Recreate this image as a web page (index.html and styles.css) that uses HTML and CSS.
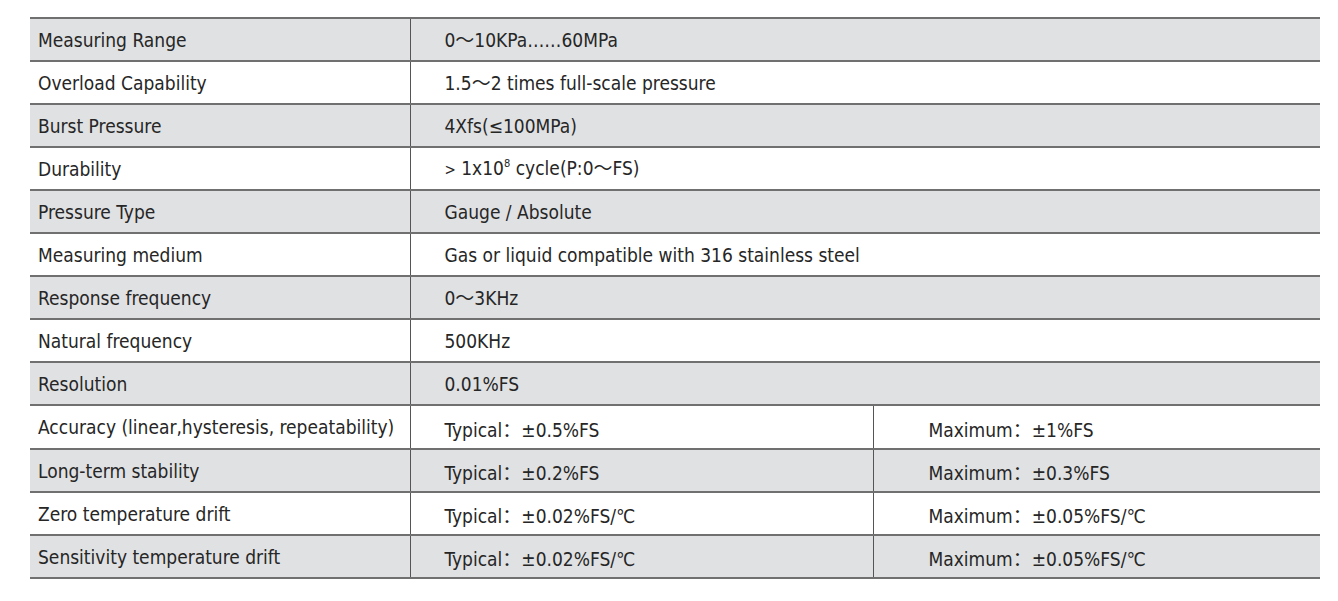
FILE: index.html
```html
<!DOCTYPE html>
<html>
<head>
<meta charset="utf-8">
<link rel="stylesheet" href="styles.css">
</head>
<body>
<table class="spec">
  <colgroup><col class="c1"><col class="c2"><col class="c3"></colgroup>
  <tr class="g"><td class="k">Measuring Range</td><td class="v" colspan="2">0～10KPa……60MPa</td></tr>
  <tr><td class="k">Overload Capability</td><td class="v" colspan="2">1.5～2 times full-scale pressure</td></tr>
  <tr class="g"><td class="k">Burst Pressure</td><td class="v" colspan="2">4Xfs(≤100MPa)</td></tr>
  <tr><td class="k">Durability</td><td class="v" colspan="2"><span class="gt">&gt;</span> 1x10<sup>8</sup> cycle(P:0～FS)</td></tr>
  <tr class="g"><td class="k">Pressure Type</td><td class="v" colspan="2">Gauge / Absolute</td></tr>
  <tr><td class="k">Measuring medium</td><td class="v" colspan="2">Gas or liquid compatible with 316 stainless steel</td></tr>
  <tr class="g"><td class="k">Response frequency</td><td class="v" colspan="2">0～3KHz</td></tr>
  <tr><td class="k">Natural frequency</td><td class="v" colspan="2">500KHz</td></tr>
  <tr class="g"><td class="k">Resolution</td><td class="v" colspan="2">0.01%FS</td></tr>
  <tr class="tall"><td class="k">Accuracy (linear,hysteresis, repeatability)</td><td class="v s">Typical：±0.5%FS</td><td class="m s">Maximum：±1%FS</td></tr>
  <tr class="g"><td class="k">Long-term stability</td><td class="v s">Typical：±0.2%FS</td><td class="m s">Maximum：±0.3%FS</td></tr>
  <tr><td class="k">Zero temperature drift</td><td class="v s">Typical：±0.02%FS/℃</td><td class="m s">Maximum：±0.05%FS/℃</td></tr>
  <tr class="g"><td class="k">Sensitivity temperature drift</td><td class="v s">Typical：±0.02%FS/℃</td><td class="m s">Maximum：±0.05%FS/℃</td></tr>
</table>
</body>
</html>
```
FILE: styles.css
```css
html, body { background: #fff; }
body { margin: 17px 0 0 30px; font-family: "DejaVu Sans Condensed", "DejaVu Sans", "Noto Sans CJK SC", sans-serif; color: #262626; }
.spec { width: 1290px; border-collapse: collapse; table-layout: fixed; font-size: 19px; }
.c1 { width: 380px; }
.c2 { width: 463px; }
.c3 { width: auto; }
.spec tr { height: 43px; }
.spec tr.tall { height: 44px; }
.spec td { border-top: 2px solid #707070; border-bottom: 2px solid #707070; padding: 0; vertical-align: middle; white-space: nowrap; line-height: 22px; }
.spec tr.g td { background: #e0e1e3; }
.k { padding-left: 8px !important; border-right: 1px solid #555; }
.v { padding-left: 34px !important; }
.m { padding-left: 55px !important; border-left: 1px solid #555; }
.s { padding-top: 5px !important; }
sup { font-size: 11px; vertical-align: 8px; line-height: 0; }
.gt { font-size: 15px; }
```
